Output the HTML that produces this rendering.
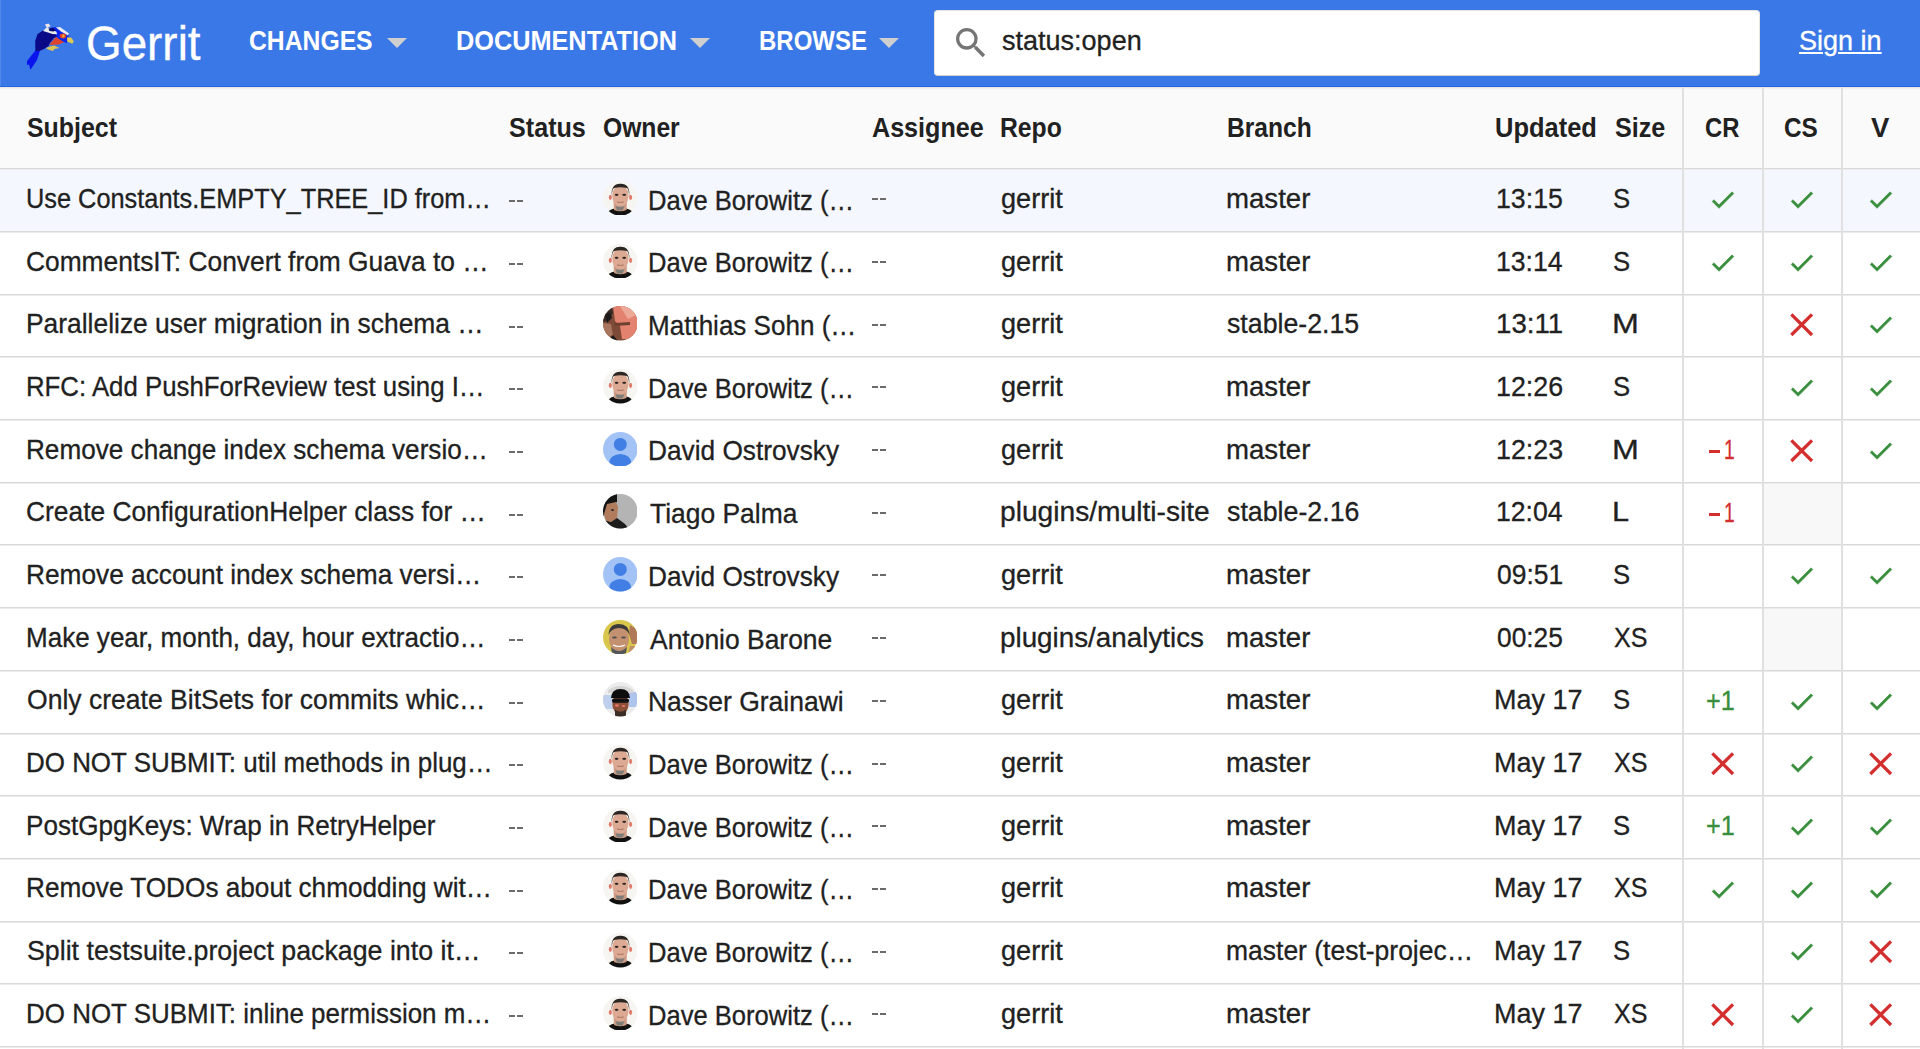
<!DOCTYPE html>
<html><head><meta charset="utf-8"><title>Gerrit Code Review</title>
<style>
html,body{margin:0;padding:0;}
body{width:1920px;height:1049px;overflow:hidden;position:relative;background:#fff;font-family:"Liberation Sans",sans-serif;color:#212121;}
.hdr{position:absolute;left:0;top:0;width:1920px;height:86px;background:#3b78e7;border-bottom:1px solid #2467e0;}
.hdrsh{position:absolute;left:0;top:87px;width:1920px;height:3px;background:linear-gradient(#e3e1dc,#f3f2f0 50%,#fafafa);}
.logo{position:absolute;left:24px;top:20px;width:52px;height:52px;}
.brand{position:absolute;left:86px;top:0;font-size:45px;line-height:0;color:#fff;}
.nav{position:absolute;color:#fff;font-weight:bold;font-size:26px;line-height:0;}
.tri{position:absolute;width:0;height:0;border-left:10px solid transparent;border-right:10px solid transparent;border-top:10px solid #cfcfcf;}
.search{position:absolute;left:934px;top:10px;width:826px;height:65.5px;background:#fff;border-radius:4px;border:1px solid #e6e4de;border-bottom-color:#d4d2cc;box-sizing:border-box;}
.stext{position:absolute;left:1001px;font-size:27px;line-height:0;color:#212121;}
.signin{position:absolute;left:1799px;font-size:27px;line-height:0;color:#fff;text-decoration:underline;text-underline-offset:3px;}
.thead{position:absolute;left:0;top:90px;width:1920px;height:79px;background:#fafafa;}
.rowbg{position:absolute;left:0;width:1920px;background:#f4f7fd;}
.gray{position:absolute;background:#f8f8f8;}
.t{position:absolute;font-size:27.5px;line-height:0;white-space:nowrap;transform-origin:0 0;-webkit-text-stroke:0.3px currentColor;}
.mark{position:absolute;}
.b{font-weight:bold;-webkit-text-stroke:0;}
.c{text-align:center;}
.dash{position:absolute;width:6px;height:2px;background:#6b6b6b;}
.ic{position:absolute;}
.av{position:absolute;}
.hl{position:absolute;left:0;width:1920px;height:2px;background:linear-gradient(#d9d9d9 50%,#ebebeb 50%);}
.vl{position:absolute;top:88px;width:2px;height:961px;background:#e0e0e0;}
</style></head><body>
<div class="hdr"></div><div class="hdrsh"></div><div style="position:absolute;left:0;top:0;width:1px;height:86px;background:#5089ea"></div>
<svg class="logo" viewBox="0 0 52 52">
 <path d="M3 41 L11.4 30.5 L16 30.8 L13 40 L9 46 L6.5 49.8 L5 44.5 L3 45z" fill="#0a14ee"/>
 <path d="M11.4 31 L11.2 21 L13.5 14 L19 10.5 L26 9.5 L32 12 L34 16.5 L30 18 L26 23 L24.5 26 L20 29 L15.5 31z" fill="#0a0a88"/>
 <path d="M24 8.5 L31 7 L39 10.5 L44.5 14.5 L45 19 L42.5 23 L37 21 L33 17.5 L31 13z" fill="#0a26ee"/>
 <path d="M19 11 L22.5 7.5 L27.5 8.5 L32.5 12 L33 14.3 L28.5 14 L24 12.5z" fill="#e8ecea"/>
 <path d="M21 4.5 L24.5 3.5 L26.5 6 L23 8z" fill="#f2e6e6"/>
 <path d="M32 7.5 L36 7 L45 13.5 L44 15.5 L37 11.5z" fill="#e8ecf0"/>
 <path d="M24.5 8.5 L29 7.8 L32 10.2 L29.5 11.6 L25.5 11z" fill="#060870"/>
 <ellipse cx="39" cy="16" rx="3.3" ry="2.4" fill="#e03c2a"/>
 <ellipse cx="39.3" cy="16" rx="1.3" ry="1.7" fill="#d8b040"/>
 <path d="M43 17.2 L47.5 17.8 L49.8 21.5 L48.3 23.8 L43.2 21.5z" fill="#e0c852"/>
 <path d="M25 25 L32 17 L40 22.3 L34.5 24.5z" fill="#e0432c"/>
 <path d="M22 28 L26 26.5 L30 25.5 L35.5 28 L30.5 29 L29 31 L24 29.5z" fill="#dcc454"/>
</svg>
<div class="t" style="left:85.94px;top:42.69px;font-size:48.5px;transform:scaleX(0.9446);color:#fff">Gerrit</div>
<div class="t b" style="left:249.30px;top:41.20px;font-size:28px;transform:scaleX(0.8828);color:#fff">CHANGES</div>
<div class="tri" style="left:387px;top:38px"></div>
<div class="t b" style="left:455.59px;top:41.20px;font-size:28px;transform:scaleX(0.9030);color:#fff">DOCUMENTATION</div>
<div class="tri" style="left:690px;top:38px"></div>
<div class="t b" style="left:758.59px;top:41.20px;font-size:28px;transform:scaleX(0.8569);color:#fff">BROWSE</div>
<div class="tri" style="left:879px;top:38px"></div>
<div class="search"></div>
<svg style="position:absolute;left:951px;top:23px;width:40px;height:40px" viewBox="0 0 24 24"><path fill="#757575" d="M15.5 14h-.79l-.28-.27A6.471 6.471 0 0 0 16 9.5 6.5 6.5 0 1 0 9.5 16c1.61 0 3.09-.59 4.23-1.57l.27.28v.79l5 4.99L20.49 19l-4.99-5zm-6 0C7.01 14 5 11.99 5 9.5S7.01 5 9.5 5 14 7.01 14 9.5 11.99 14 9.5 14z"/></svg>
<div class="t" style="left:1001.56px;top:41.47px;font-size:27.5px;transform:scaleX(0.9825);">status:open</div>
<div class="t" style="left:1799.07px;top:41.47px;font-size:27.5px;transform:scaleX(0.9827);color:#fff;text-decoration:underline;text-underline-offset:2px;text-decoration-thickness:2px">Sign in</div>
<div class="thead"></div>
<div class="t b" style="left:26.62px;top:127.67px;font-size:27.5px;transform:scaleX(0.9059);">Subject</div>
<div class="t b" style="left:509.11px;top:127.67px;font-size:27.5px;transform:scaleX(0.9143);">Status</div>
<div class="t b" style="left:602.78px;top:127.67px;font-size:27.5px;transform:scaleX(0.8964);">Owner</div>
<div class="t b" style="left:871.91px;top:127.67px;font-size:27.5px;transform:scaleX(0.9137);">Assignee</div>
<div class="t b" style="left:1000.33px;top:127.67px;font-size:27.5px;transform:scaleX(0.8985);">Repo</div>
<div class="t b" style="left:1226.84px;top:127.67px;font-size:27.5px;transform:scaleX(0.8942);">Branch</div>
<div class="t b" style="left:1495.48px;top:127.67px;font-size:27.5px;transform:scaleX(0.9258);">Updated</div>
<div class="t b" style="left:1615.11px;top:127.67px;font-size:27.5px;transform:scaleX(0.9146);">Size</div>
<div class="t b" style="left:1705.22px;top:127.67px;font-size:27.5px;transform:scaleX(0.8662);">CR</div>
<div class="t b" style="left:1784.29px;top:127.67px;font-size:27.5px;transform:scaleX(0.8861);">CS</div>
<div class="t b" style="left:1871.05px;top:127.67px;font-size:27.5px;transform:scaleX(0.9972);">V</div>
<div class="rowbg" style="top:168.80px;height:62.69px"></div>
<div class="t" style="left:26.06px;top:198.87px;font-size:27.5px;transform:scaleX(0.9216);">Use Constants.EMPTY_TREE_ID from…</div>
<div class="dash" style="left:509px;top:200.20px"></div><div class="dash" style="left:517px;top:200.20px"></div>
<svg class="av" style="left:602.50px;top:180.90px;width:34.60px;height:34.60px" viewBox="0 0 34.6 34.6"><defs><clipPath id="cdave198"><circle cx="17.3" cy="17.3" r="17.3"/></clipPath></defs><g clip-path="url(#cdave198)"><rect width="35" height="35" fill="#f7f5f1"/><path d="M3 35 Q5 28.5 11.5 27.5 L23 27.5 Q29.5 28.5 31.5 35z" fill="#111"/><path d="M10.5 20 L24 20 L23.5 29 Q17.3 31.5 11 29z" fill="#cf9c84"/><path d="M12.5 25.5 L21.5 25.5 L19.5 29.5 L14 29.5z" fill="#7f7d7a"/><ellipse cx="7.3" cy="16.3" rx="1.5" ry="2.6" fill="#e07868"/><ellipse cx="27.6" cy="16.3" rx="1.5" ry="2.6" fill="#e07868"/><ellipse cx="17.4" cy="14.8" rx="8.2" ry="10.8" fill="#dcaa93"/><path d="M8.6 15 Q8 2.5 17.4 2.8 Q27 2.5 26.3 15 Q25.5 7.5 24 7 Q17.4 5.5 11 7 Q9.3 7.5 8.6 15z" fill="#2b2623"/><ellipse cx="13.6" cy="13.8" rx="1.9" ry="1.1" fill="#2e2624"/><ellipse cx="21.2" cy="13.8" rx="1.9" ry="1.1" fill="#2e2624"/><path d="M14 21 Q17.4 22 20.8 21" stroke="#a86e5c" stroke-width="1" fill="none"/></g></svg>
<div class="t" style="left:647.91px;top:200.67px;font-size:27.5px;transform:scaleX(0.9295);">Dave Borowitz (…</div>
<div class="dash" style="left:872px;top:198.30px"></div><div class="dash" style="left:880px;top:198.30px"></div>
<div class="t" style="left:1000.87px;top:198.87px;font-size:27.5px;transform:scaleX(0.9861);">gerrit</div>
<div class="t" style="left:1226.34px;top:198.87px;font-size:27.5px;transform:scaleX(1.0043);">master</div>
<div class="t" style="left:1496.16px;top:198.87px;font-size:27.5px;transform:scaleX(0.9719);">13:15</div>
<div class="t" style="left:1613.13px;top:198.87px;font-size:27.5px;transform:scaleX(0.9333);">S</div>
<svg class="ic" style="left:1707.77px;top:185.00px;width:29.47px;height:29.47px" viewBox="0 0 24 24"><path fill="#388e3c" stroke="#388e3c" stroke-width="0.45" stroke-linejoin="miter" d="M9 16.17L4.83 12l-1.42 1.41L9 19 21 7l-1.41-1.41z"/></svg>
<svg class="ic" style="left:1787.02px;top:185.00px;width:29.47px;height:29.47px" viewBox="0 0 24 24"><path fill="#388e3c" stroke="#388e3c" stroke-width="0.45" stroke-linejoin="miter" d="M9 16.17L4.83 12l-1.42 1.41L9 19 21 7l-1.41-1.41z"/></svg>
<svg class="ic" style="left:1865.77px;top:185.00px;width:29.47px;height:29.47px" viewBox="0 0 24 24"><path fill="#388e3c" stroke="#388e3c" stroke-width="0.45" stroke-linejoin="miter" d="M9 16.17L4.83 12l-1.42 1.41L9 19 21 7l-1.41-1.41z"/></svg>
<div class="t" style="left:26.46px;top:261.56px;font-size:27.5px;transform:scaleX(0.9580);">CommentsIT: Convert from Guava to …</div>
<div class="dash" style="left:509px;top:262.89px"></div><div class="dash" style="left:517px;top:262.89px"></div>
<svg class="av" style="left:602.50px;top:243.59px;width:34.60px;height:34.60px" viewBox="0 0 34.6 34.6"><defs><clipPath id="cdave260"><circle cx="17.3" cy="17.3" r="17.3"/></clipPath></defs><g clip-path="url(#cdave260)"><rect width="35" height="35" fill="#f7f5f1"/><path d="M3 35 Q5 28.5 11.5 27.5 L23 27.5 Q29.5 28.5 31.5 35z" fill="#111"/><path d="M10.5 20 L24 20 L23.5 29 Q17.3 31.5 11 29z" fill="#cf9c84"/><path d="M12.5 25.5 L21.5 25.5 L19.5 29.5 L14 29.5z" fill="#7f7d7a"/><ellipse cx="7.3" cy="16.3" rx="1.5" ry="2.6" fill="#e07868"/><ellipse cx="27.6" cy="16.3" rx="1.5" ry="2.6" fill="#e07868"/><ellipse cx="17.4" cy="14.8" rx="8.2" ry="10.8" fill="#dcaa93"/><path d="M8.6 15 Q8 2.5 17.4 2.8 Q27 2.5 26.3 15 Q25.5 7.5 24 7 Q17.4 5.5 11 7 Q9.3 7.5 8.6 15z" fill="#2b2623"/><ellipse cx="13.6" cy="13.8" rx="1.9" ry="1.1" fill="#2e2624"/><ellipse cx="21.2" cy="13.8" rx="1.9" ry="1.1" fill="#2e2624"/><path d="M14 21 Q17.4 22 20.8 21" stroke="#a86e5c" stroke-width="1" fill="none"/></g></svg>
<div class="t" style="left:647.91px;top:263.36px;font-size:27.5px;transform:scaleX(0.9295);">Dave Borowitz (…</div>
<div class="dash" style="left:872px;top:260.99px"></div><div class="dash" style="left:880px;top:260.99px"></div>
<div class="t" style="left:1000.87px;top:261.56px;font-size:27.5px;transform:scaleX(0.9861);">gerrit</div>
<div class="t" style="left:1226.34px;top:261.56px;font-size:27.5px;transform:scaleX(1.0043);">master</div>
<div class="t" style="left:1496.16px;top:261.56px;font-size:27.5px;transform:scaleX(0.9682);">13:14</div>
<div class="t" style="left:1613.13px;top:261.56px;font-size:27.5px;transform:scaleX(0.9333);">S</div>
<svg class="ic" style="left:1707.77px;top:247.69px;width:29.47px;height:29.47px" viewBox="0 0 24 24"><path fill="#388e3c" stroke="#388e3c" stroke-width="0.45" stroke-linejoin="miter" d="M9 16.17L4.83 12l-1.42 1.41L9 19 21 7l-1.41-1.41z"/></svg>
<svg class="ic" style="left:1787.02px;top:247.69px;width:29.47px;height:29.47px" viewBox="0 0 24 24"><path fill="#388e3c" stroke="#388e3c" stroke-width="0.45" stroke-linejoin="miter" d="M9 16.17L4.83 12l-1.42 1.41L9 19 21 7l-1.41-1.41z"/></svg>
<svg class="ic" style="left:1865.77px;top:247.69px;width:29.47px;height:29.47px" viewBox="0 0 24 24"><path fill="#388e3c" stroke="#388e3c" stroke-width="0.45" stroke-linejoin="miter" d="M9 16.17L4.83 12l-1.42 1.41L9 19 21 7l-1.41-1.41z"/></svg>
<div class="t" style="left:25.74px;top:324.25px;font-size:27.5px;transform:scaleX(0.9599);">Parallelize user migration in schema …</div>
<div class="dash" style="left:509px;top:325.58px"></div><div class="dash" style="left:517px;top:325.58px"></div>
<svg class="av" style="left:602.50px;top:306.28px;width:34.60px;height:34.60px" viewBox="0 0 34.6 34.6"><defs><clipPath id="cmatthias323"><circle cx="17.3" cy="17.3" r="17.3"/></clipPath></defs><g clip-path="url(#cmatthias323)"><rect width="35" height="35" fill="#7d4a38"/><path d="M10 0 L35 0 L35 25 L27 33 L19 33 L17 20 L12 15z" fill="#e3826f"/><path d="M17 0 L30 0 L33 9 L25 13z" fill="#eda998"/><path d="M0 17 L8 18 L10 29 L4 32 L0 30z" fill="#a8765e"/><path d="M0 0 L9 0 L10 7 L5 15 L0 16z" fill="#3a2a26"/><path d="M2 9 L7 6 L9 12 L4 17z" fill="#1c1a1a"/><path d="M6 33 L10 29 L15 35 L4 35z" fill="#1a1818"/><path d="M29 35 L32 27 L35 25 L35 35z" fill="#1c1a1a"/><path d="M12 17 L27 16 L27 19 L12 20z" fill="#6e3e2e"/></g></svg>
<div class="t" style="left:647.87px;top:326.05px;font-size:27.5px;transform:scaleX(0.9466);">Matthias Sohn (…</div>
<div class="dash" style="left:872px;top:323.68px"></div><div class="dash" style="left:880px;top:323.68px"></div>
<div class="t" style="left:1000.87px;top:324.25px;font-size:27.5px;transform:scaleX(0.9861);">gerrit</div>
<div class="t" style="left:1227.37px;top:324.25px;font-size:27.5px;transform:scaleX(0.9713);">stable-2.15</div>
<div class="t" style="left:1496.09px;top:324.25px;font-size:27.5px;transform:scaleX(1.0063);">13:11</div>
<div class="t" style="left:1611.66px;top:324.25px;font-size:27.5px;transform:scaleX(1.1730);">M</div>
<svg class="ic" style="left:1782.32px;top:305.30px;width:39.36px;height:39.36px" viewBox="0 0 24 24"><path fill="#d32f2f" d="M19 6.41L17.59 5 12 10.59 6.41 5 5 6.41 10.59 12 5 17.59 6.41 19 12 13.41 17.59 19 19 17.59 13.41 12z"/></svg>
<svg class="ic" style="left:1865.77px;top:310.38px;width:29.47px;height:29.47px" viewBox="0 0 24 24"><path fill="#388e3c" stroke="#388e3c" stroke-width="0.45" stroke-linejoin="miter" d="M9 16.17L4.83 12l-1.42 1.41L9 19 21 7l-1.41-1.41z"/></svg>
<div class="t" style="left:25.79px;top:386.94px;font-size:27.5px;transform:scaleX(0.9377);">RFC: Add PushForReview test using I…</div>
<div class="dash" style="left:509px;top:388.27px"></div><div class="dash" style="left:517px;top:388.27px"></div>
<svg class="av" style="left:602.50px;top:368.97px;width:34.60px;height:34.60px" viewBox="0 0 34.6 34.6"><defs><clipPath id="cdave386"><circle cx="17.3" cy="17.3" r="17.3"/></clipPath></defs><g clip-path="url(#cdave386)"><rect width="35" height="35" fill="#f7f5f1"/><path d="M3 35 Q5 28.5 11.5 27.5 L23 27.5 Q29.5 28.5 31.5 35z" fill="#111"/><path d="M10.5 20 L24 20 L23.5 29 Q17.3 31.5 11 29z" fill="#cf9c84"/><path d="M12.5 25.5 L21.5 25.5 L19.5 29.5 L14 29.5z" fill="#7f7d7a"/><ellipse cx="7.3" cy="16.3" rx="1.5" ry="2.6" fill="#e07868"/><ellipse cx="27.6" cy="16.3" rx="1.5" ry="2.6" fill="#e07868"/><ellipse cx="17.4" cy="14.8" rx="8.2" ry="10.8" fill="#dcaa93"/><path d="M8.6 15 Q8 2.5 17.4 2.8 Q27 2.5 26.3 15 Q25.5 7.5 24 7 Q17.4 5.5 11 7 Q9.3 7.5 8.6 15z" fill="#2b2623"/><ellipse cx="13.6" cy="13.8" rx="1.9" ry="1.1" fill="#2e2624"/><ellipse cx="21.2" cy="13.8" rx="1.9" ry="1.1" fill="#2e2624"/><path d="M14 21 Q17.4 22 20.8 21" stroke="#a86e5c" stroke-width="1" fill="none"/></g></svg>
<div class="t" style="left:647.91px;top:388.74px;font-size:27.5px;transform:scaleX(0.9295);">Dave Borowitz (…</div>
<div class="dash" style="left:872px;top:386.37px"></div><div class="dash" style="left:880px;top:386.37px"></div>
<div class="t" style="left:1000.87px;top:386.94px;font-size:27.5px;transform:scaleX(0.9861);">gerrit</div>
<div class="t" style="left:1226.34px;top:386.94px;font-size:27.5px;transform:scaleX(1.0043);">master</div>
<div class="t" style="left:1496.15px;top:386.94px;font-size:27.5px;transform:scaleX(0.9756);">12:26</div>
<div class="t" style="left:1613.13px;top:386.94px;font-size:27.5px;transform:scaleX(0.9333);">S</div>
<svg class="ic" style="left:1787.02px;top:373.07px;width:29.47px;height:29.47px" viewBox="0 0 24 24"><path fill="#388e3c" stroke="#388e3c" stroke-width="0.45" stroke-linejoin="miter" d="M9 16.17L4.83 12l-1.42 1.41L9 19 21 7l-1.41-1.41z"/></svg>
<svg class="ic" style="left:1865.77px;top:373.07px;width:29.47px;height:29.47px" viewBox="0 0 24 24"><path fill="#388e3c" stroke="#388e3c" stroke-width="0.45" stroke-linejoin="miter" d="M9 16.17L4.83 12l-1.42 1.41L9 19 21 7l-1.41-1.41z"/></svg>
<div class="t" style="left:25.76px;top:449.63px;font-size:27.5px;transform:scaleX(0.9502);">Remove change index schema versio…</div>
<div class="dash" style="left:509px;top:450.96px"></div><div class="dash" style="left:517px;top:450.96px"></div>
<svg class="av" style="left:602.50px;top:431.66px;width:34.60px;height:34.60px" viewBox="0 0 34.6 34.6"><defs><clipPath id="cdefault448"><circle cx="17.3" cy="17.3" r="17.3"/></clipPath></defs><g clip-path="url(#cdefault448)"><rect width="35" height="35" fill="#a3c3f7"/><circle cx="17.3" cy="12.4" r="6.5" fill="#427fe4"/><ellipse cx="17.3" cy="30.5" rx="11" ry="8.6" fill="#427fe4"/></g></svg>
<div class="t" style="left:647.85px;top:451.43px;font-size:27.5px;transform:scaleX(0.9542);">David Ostrovsky</div>
<div class="dash" style="left:872px;top:449.06px"></div><div class="dash" style="left:880px;top:449.06px"></div>
<div class="t" style="left:1000.87px;top:449.63px;font-size:27.5px;transform:scaleX(0.9861);">gerrit</div>
<div class="t" style="left:1226.34px;top:449.63px;font-size:27.5px;transform:scaleX(1.0043);">master</div>
<div class="t" style="left:1496.15px;top:449.63px;font-size:27.5px;transform:scaleX(0.9756);">12:23</div>
<div class="t" style="left:1611.66px;top:449.63px;font-size:27.5px;transform:scaleX(1.1730);">M</div>
<div class="mark" style="left:1708.8px;top:450.46px;width:11px;height:2.4px;background:#d32f2f"></div>
<div class="t" style="left:1724.20px;top:450.23px;font-size:27.5px;transform:scaleX(0.7000);color:#d32f2f">1</div>
<svg class="ic" style="left:1782.32px;top:430.68px;width:39.36px;height:39.36px" viewBox="0 0 24 24"><path fill="#d32f2f" d="M19 6.41L17.59 5 12 10.59 6.41 5 5 6.41 10.59 12 5 17.59 6.41 19 12 13.41 17.59 19 19 17.59 13.41 12z"/></svg>
<svg class="ic" style="left:1865.77px;top:435.76px;width:29.47px;height:29.47px" viewBox="0 0 24 24"><path fill="#388e3c" stroke="#388e3c" stroke-width="0.45" stroke-linejoin="miter" d="M9 16.17L4.83 12l-1.42 1.41L9 19 21 7l-1.41-1.41z"/></svg>
<div class="gray" style="left:1761.5px;top:482.25px;width:79.0px;height:62.69px"></div>
<div class="t" style="left:26.46px;top:512.32px;font-size:27.5px;transform:scaleX(0.9584);">Create ConfigurationHelper class for …</div>
<div class="dash" style="left:509px;top:513.65px"></div><div class="dash" style="left:517px;top:513.65px"></div>
<svg class="av" style="left:602.50px;top:494.35px;width:34.60px;height:34.60px" viewBox="0 0 34.6 34.6"><defs><clipPath id="ctiago511"><circle cx="17.3" cy="17.3" r="17.3"/></clipPath></defs><g clip-path="url(#ctiago511)"><rect width="35" height="35" fill="#b4b4b4"/><path d="M0 0 L14 0 L14 8 L6 12 L3 20 L0 22z" fill="#141414"/><path d="M4 10 L13 8 L15 13 L14 24 L8 28 L3 27 L1 20z" fill="#b07c5c"/><path d="M0 26 L8 28 L14 24 L22 30 L26 35 L0 35z" fill="#1c1c1c"/><ellipse cx="9.5" cy="16" rx="1.5" ry="0.9" fill="#2a2a30"/></g></svg>
<div class="t" style="left:649.52px;top:514.12px;font-size:27.5px;transform:scaleX(0.9610);">Tiago Palma</div>
<div class="dash" style="left:872px;top:511.75px"></div><div class="dash" style="left:880px;top:511.75px"></div>
<div class="t" style="left:1000.31px;top:512.32px;font-size:27.5px;transform:scaleX(1.0240);">plugins/multi-site</div>
<div class="t" style="left:1227.37px;top:512.32px;font-size:27.5px;transform:scaleX(0.9731);">stable-2.16</div>
<div class="t" style="left:1496.16px;top:512.32px;font-size:27.5px;transform:scaleX(0.9682);">12:04</div>
<div class="t" style="left:1611.78px;top:512.32px;font-size:27.5px;transform:scaleX(1.1184);">L</div>
<div class="mark" style="left:1708.8px;top:513.15px;width:11px;height:2.4px;background:#d32f2f"></div>
<div class="t" style="left:1724.20px;top:512.92px;font-size:27.5px;transform:scaleX(0.7000);color:#d32f2f">1</div>
<div class="t" style="left:25.75px;top:575.01px;font-size:27.5px;transform:scaleX(0.9546);">Remove account index schema versi…</div>
<div class="dash" style="left:509px;top:576.34px"></div><div class="dash" style="left:517px;top:576.34px"></div>
<svg class="av" style="left:602.50px;top:557.04px;width:34.60px;height:34.60px" viewBox="0 0 34.6 34.6"><defs><clipPath id="cdefault574"><circle cx="17.3" cy="17.3" r="17.3"/></clipPath></defs><g clip-path="url(#cdefault574)"><rect width="35" height="35" fill="#a3c3f7"/><circle cx="17.3" cy="12.4" r="6.5" fill="#427fe4"/><ellipse cx="17.3" cy="30.5" rx="11" ry="8.6" fill="#427fe4"/></g></svg>
<div class="t" style="left:647.85px;top:576.81px;font-size:27.5px;transform:scaleX(0.9542);">David Ostrovsky</div>
<div class="dash" style="left:872px;top:574.44px"></div><div class="dash" style="left:880px;top:574.44px"></div>
<div class="t" style="left:1000.87px;top:575.01px;font-size:27.5px;transform:scaleX(0.9861);">gerrit</div>
<div class="t" style="left:1226.34px;top:575.01px;font-size:27.5px;transform:scaleX(1.0043);">master</div>
<div class="t" style="left:1497.14px;top:575.01px;font-size:27.5px;transform:scaleX(0.9609);">09:51</div>
<div class="t" style="left:1613.13px;top:575.01px;font-size:27.5px;transform:scaleX(0.9333);">S</div>
<svg class="ic" style="left:1787.02px;top:561.14px;width:29.47px;height:29.47px" viewBox="0 0 24 24"><path fill="#388e3c" stroke="#388e3c" stroke-width="0.45" stroke-linejoin="miter" d="M9 16.17L4.83 12l-1.42 1.41L9 19 21 7l-1.41-1.41z"/></svg>
<svg class="ic" style="left:1865.77px;top:561.14px;width:29.47px;height:29.47px" viewBox="0 0 24 24"><path fill="#388e3c" stroke="#388e3c" stroke-width="0.45" stroke-linejoin="miter" d="M9 16.17L4.83 12l-1.42 1.41L9 19 21 7l-1.41-1.41z"/></svg>
<div class="gray" style="left:1761.5px;top:607.63px;width:79.0px;height:62.69px"></div>
<div class="t" style="left:25.77px;top:637.70px;font-size:27.5px;transform:scaleX(0.9464);">Make year, month, day, hour extractio…</div>
<div class="dash" style="left:509px;top:639.03px"></div><div class="dash" style="left:517px;top:639.03px"></div>
<svg class="av" style="left:602.50px;top:619.73px;width:34.60px;height:34.60px" viewBox="0 0 34.6 34.6"><defs><clipPath id="cantonio637"><circle cx="17.3" cy="17.3" r="17.3"/></clipPath></defs><g clip-path="url(#cantonio637)"><rect width="35" height="35" fill="#d9c64c"/><path d="M27 5 L35 10 L35 24 L29 24 L26 14z" fill="#b07a58"/><path d="M27 26 L35 26 L35 35 L25 35z" fill="#c09068"/><ellipse cx="16" cy="19" rx="10" ry="13" fill="#c39170"/><path d="M5.5 15 Q6 4 16 4 Q26 4 26.5 15 Q23.5 8 16 8 Q8.5 8 5.5 15z" fill="#3a3a3a"/><ellipse cx="11.5" cy="17.5" rx="2.4" ry="1.1" fill="#4a4e54"/><ellipse cx="20.5" cy="17.5" rx="2.4" ry="1.1" fill="#4a4e54"/><path d="M10 25 Q16 28 22 25" stroke="#fff" stroke-width="1.2" fill="none"/><path d="M8 27 Q16 35 24 27 L23 33 Q16 36 9 33z" fill="#55575b"/></g></svg>
<div class="t" style="left:650.00px;top:639.50px;font-size:27.5px;transform:scaleX(0.9613);">Antonio Barone</div>
<div class="dash" style="left:872px;top:637.13px"></div><div class="dash" style="left:880px;top:637.13px"></div>
<div class="t" style="left:1000.33px;top:637.70px;font-size:27.5px;transform:scaleX(1.0111);">plugins/analytics</div>
<div class="t" style="left:1226.34px;top:637.70px;font-size:27.5px;transform:scaleX(1.0043);">master</div>
<div class="t" style="left:1497.14px;top:637.70px;font-size:27.5px;transform:scaleX(0.9573);">00:25</div>
<div class="t" style="left:1613.62px;top:637.70px;font-size:27.5px;transform:scaleX(0.9122);">XS</div>
<div class="t" style="left:26.69px;top:700.39px;font-size:27.5px;transform:scaleX(0.9650);">Only create BitSets for commits whic…</div>
<div class="dash" style="left:509px;top:701.72px"></div><div class="dash" style="left:517px;top:701.72px"></div>
<svg class="av" style="left:602.50px;top:682.42px;width:34.60px;height:34.60px" viewBox="0 0 34.6 34.6"><defs><clipPath id="cnasser699"><circle cx="17.3" cy="17.3" r="17.3"/></clipPath></defs><g clip-path="url(#cnasser699)"><rect width="35" height="35" fill="#ececec"/><path d="M0 13 L9 13 L10 27 L0 27z" fill="#bfd0ee"/><path d="M26 10 L35 10 L35 25 L26 25z" fill="#aec4ec"/><path d="M5 8 Q17.5 0 30 8 L30 11 L5 11z" fill="#d6d6d6"/><ellipse cx="17.5" cy="22" rx="8.2" ry="10.5" fill="#8a5038"/><path d="M8 16 Q8.5 7 17.5 7 Q26.5 7 27 16z" fill="#0d0d0d"/><rect x="9" y="16.5" width="17" height="4.2" rx="1.8" fill="#111"/><path d="M12 27.5 Q17.5 32 23 27.5 L23 35 L12 35z" fill="#3a2c26"/><ellipse cx="14" cy="23.5" rx="2" ry="1.2" fill="#e8746a"/><ellipse cx="20.5" cy="24" rx="1.8" ry="1.1" fill="#e87468"/></g></svg>
<div class="t" style="left:647.83px;top:702.19px;font-size:27.5px;transform:scaleX(0.9626);">Nasser Grainawi</div>
<div class="dash" style="left:872px;top:699.82px"></div><div class="dash" style="left:880px;top:699.82px"></div>
<div class="t" style="left:1000.87px;top:700.39px;font-size:27.5px;transform:scaleX(0.9861);">gerrit</div>
<div class="t" style="left:1226.34px;top:700.39px;font-size:27.5px;transform:scaleX(1.0043);">master</div>
<div class="t" style="left:1494.39px;top:700.39px;font-size:27.5px;transform:scaleX(0.9815);">May 17</div>
<div class="t" style="left:1613.13px;top:700.39px;font-size:27.5px;transform:scaleX(0.9333);">S</div>
<div class="t" style="left:1706.45px;top:700.99px;font-size:27.5px;transform:scaleX(0.9183);color:#388e3c">+1</div>
<svg class="ic" style="left:1787.02px;top:686.52px;width:29.47px;height:29.47px" viewBox="0 0 24 24"><path fill="#388e3c" stroke="#388e3c" stroke-width="0.45" stroke-linejoin="miter" d="M9 16.17L4.83 12l-1.42 1.41L9 19 21 7l-1.41-1.41z"/></svg>
<svg class="ic" style="left:1865.77px;top:686.52px;width:29.47px;height:29.47px" viewBox="0 0 24 24"><path fill="#388e3c" stroke="#388e3c" stroke-width="0.45" stroke-linejoin="miter" d="M9 16.17L4.83 12l-1.42 1.41L9 19 21 7l-1.41-1.41z"/></svg>
<div class="t" style="left:25.78px;top:763.08px;font-size:27.5px;transform:scaleX(0.9436);">DO NOT SUBMIT: util methods in plug…</div>
<div class="dash" style="left:509px;top:764.41px"></div><div class="dash" style="left:517px;top:764.41px"></div>
<svg class="av" style="left:602.50px;top:745.11px;width:34.60px;height:34.60px" viewBox="0 0 34.6 34.6"><defs><clipPath id="cdave762"><circle cx="17.3" cy="17.3" r="17.3"/></clipPath></defs><g clip-path="url(#cdave762)"><rect width="35" height="35" fill="#f7f5f1"/><path d="M3 35 Q5 28.5 11.5 27.5 L23 27.5 Q29.5 28.5 31.5 35z" fill="#111"/><path d="M10.5 20 L24 20 L23.5 29 Q17.3 31.5 11 29z" fill="#cf9c84"/><path d="M12.5 25.5 L21.5 25.5 L19.5 29.5 L14 29.5z" fill="#7f7d7a"/><ellipse cx="7.3" cy="16.3" rx="1.5" ry="2.6" fill="#e07868"/><ellipse cx="27.6" cy="16.3" rx="1.5" ry="2.6" fill="#e07868"/><ellipse cx="17.4" cy="14.8" rx="8.2" ry="10.8" fill="#dcaa93"/><path d="M8.6 15 Q8 2.5 17.4 2.8 Q27 2.5 26.3 15 Q25.5 7.5 24 7 Q17.4 5.5 11 7 Q9.3 7.5 8.6 15z" fill="#2b2623"/><ellipse cx="13.6" cy="13.8" rx="1.9" ry="1.1" fill="#2e2624"/><ellipse cx="21.2" cy="13.8" rx="1.9" ry="1.1" fill="#2e2624"/><path d="M14 21 Q17.4 22 20.8 21" stroke="#a86e5c" stroke-width="1" fill="none"/></g></svg>
<div class="t" style="left:647.91px;top:764.88px;font-size:27.5px;transform:scaleX(0.9295);">Dave Borowitz (…</div>
<div class="dash" style="left:872px;top:762.51px"></div><div class="dash" style="left:880px;top:762.51px"></div>
<div class="t" style="left:1000.87px;top:763.08px;font-size:27.5px;transform:scaleX(0.9861);">gerrit</div>
<div class="t" style="left:1226.34px;top:763.08px;font-size:27.5px;transform:scaleX(1.0043);">master</div>
<div class="t" style="left:1494.39px;top:763.08px;font-size:27.5px;transform:scaleX(0.9815);">May 17</div>
<div class="t" style="left:1613.62px;top:763.08px;font-size:27.5px;transform:scaleX(0.9122);">XS</div>
<svg class="ic" style="left:1703.07px;top:744.13px;width:39.36px;height:39.36px" viewBox="0 0 24 24"><path fill="#d32f2f" d="M19 6.41L17.59 5 12 10.59 6.41 5 5 6.41 10.59 12 5 17.59 6.41 19 12 13.41 17.59 19 19 17.59 13.41 12z"/></svg>
<svg class="ic" style="left:1787.02px;top:749.21px;width:29.47px;height:29.47px" viewBox="0 0 24 24"><path fill="#388e3c" stroke="#388e3c" stroke-width="0.45" stroke-linejoin="miter" d="M9 16.17L4.83 12l-1.42 1.41L9 19 21 7l-1.41-1.41z"/></svg>
<svg class="ic" style="left:1861.07px;top:744.13px;width:39.36px;height:39.36px" viewBox="0 0 24 24"><path fill="#d32f2f" d="M19 6.41L17.59 5 12 10.59 6.41 5 5 6.41 10.59 12 5 17.59 6.41 19 12 13.41 17.59 19 19 17.59 13.41 12z"/></svg>
<div class="t" style="left:25.77px;top:825.77px;font-size:27.5px;transform:scaleX(0.9479);">PostGpgKeys: Wrap in RetryHelper</div>
<div class="dash" style="left:509px;top:827.10px"></div><div class="dash" style="left:517px;top:827.10px"></div>
<svg class="av" style="left:602.50px;top:807.80px;width:34.60px;height:34.60px" viewBox="0 0 34.6 34.6"><defs><clipPath id="cdave825"><circle cx="17.3" cy="17.3" r="17.3"/></clipPath></defs><g clip-path="url(#cdave825)"><rect width="35" height="35" fill="#f7f5f1"/><path d="M3 35 Q5 28.5 11.5 27.5 L23 27.5 Q29.5 28.5 31.5 35z" fill="#111"/><path d="M10.5 20 L24 20 L23.5 29 Q17.3 31.5 11 29z" fill="#cf9c84"/><path d="M12.5 25.5 L21.5 25.5 L19.5 29.5 L14 29.5z" fill="#7f7d7a"/><ellipse cx="7.3" cy="16.3" rx="1.5" ry="2.6" fill="#e07868"/><ellipse cx="27.6" cy="16.3" rx="1.5" ry="2.6" fill="#e07868"/><ellipse cx="17.4" cy="14.8" rx="8.2" ry="10.8" fill="#dcaa93"/><path d="M8.6 15 Q8 2.5 17.4 2.8 Q27 2.5 26.3 15 Q25.5 7.5 24 7 Q17.4 5.5 11 7 Q9.3 7.5 8.6 15z" fill="#2b2623"/><ellipse cx="13.6" cy="13.8" rx="1.9" ry="1.1" fill="#2e2624"/><ellipse cx="21.2" cy="13.8" rx="1.9" ry="1.1" fill="#2e2624"/><path d="M14 21 Q17.4 22 20.8 21" stroke="#a86e5c" stroke-width="1" fill="none"/></g></svg>
<div class="t" style="left:647.91px;top:827.57px;font-size:27.5px;transform:scaleX(0.9295);">Dave Borowitz (…</div>
<div class="dash" style="left:872px;top:825.20px"></div><div class="dash" style="left:880px;top:825.20px"></div>
<div class="t" style="left:1000.87px;top:825.77px;font-size:27.5px;transform:scaleX(0.9861);">gerrit</div>
<div class="t" style="left:1226.34px;top:825.77px;font-size:27.5px;transform:scaleX(1.0043);">master</div>
<div class="t" style="left:1494.39px;top:825.77px;font-size:27.5px;transform:scaleX(0.9815);">May 17</div>
<div class="t" style="left:1613.13px;top:825.77px;font-size:27.5px;transform:scaleX(0.9333);">S</div>
<div class="t" style="left:1706.45px;top:826.37px;font-size:27.5px;transform:scaleX(0.9183);color:#388e3c">+1</div>
<svg class="ic" style="left:1787.02px;top:811.90px;width:29.47px;height:29.47px" viewBox="0 0 24 24"><path fill="#388e3c" stroke="#388e3c" stroke-width="0.45" stroke-linejoin="miter" d="M9 16.17L4.83 12l-1.42 1.41L9 19 21 7l-1.41-1.41z"/></svg>
<svg class="ic" style="left:1865.77px;top:811.90px;width:29.47px;height:29.47px" viewBox="0 0 24 24"><path fill="#388e3c" stroke="#388e3c" stroke-width="0.45" stroke-linejoin="miter" d="M9 16.17L4.83 12l-1.42 1.41L9 19 21 7l-1.41-1.41z"/></svg>
<div class="t" style="left:25.76px;top:888.46px;font-size:27.5px;transform:scaleX(0.9517);">Remove TODOs about chmodding wit…</div>
<div class="dash" style="left:509px;top:889.79px"></div><div class="dash" style="left:517px;top:889.79px"></div>
<svg class="av" style="left:602.50px;top:870.49px;width:34.60px;height:34.60px" viewBox="0 0 34.6 34.6"><defs><clipPath id="cdave887"><circle cx="17.3" cy="17.3" r="17.3"/></clipPath></defs><g clip-path="url(#cdave887)"><rect width="35" height="35" fill="#f7f5f1"/><path d="M3 35 Q5 28.5 11.5 27.5 L23 27.5 Q29.5 28.5 31.5 35z" fill="#111"/><path d="M10.5 20 L24 20 L23.5 29 Q17.3 31.5 11 29z" fill="#cf9c84"/><path d="M12.5 25.5 L21.5 25.5 L19.5 29.5 L14 29.5z" fill="#7f7d7a"/><ellipse cx="7.3" cy="16.3" rx="1.5" ry="2.6" fill="#e07868"/><ellipse cx="27.6" cy="16.3" rx="1.5" ry="2.6" fill="#e07868"/><ellipse cx="17.4" cy="14.8" rx="8.2" ry="10.8" fill="#dcaa93"/><path d="M8.6 15 Q8 2.5 17.4 2.8 Q27 2.5 26.3 15 Q25.5 7.5 24 7 Q17.4 5.5 11 7 Q9.3 7.5 8.6 15z" fill="#2b2623"/><ellipse cx="13.6" cy="13.8" rx="1.9" ry="1.1" fill="#2e2624"/><ellipse cx="21.2" cy="13.8" rx="1.9" ry="1.1" fill="#2e2624"/><path d="M14 21 Q17.4 22 20.8 21" stroke="#a86e5c" stroke-width="1" fill="none"/></g></svg>
<div class="t" style="left:647.91px;top:890.26px;font-size:27.5px;transform:scaleX(0.9295);">Dave Borowitz (…</div>
<div class="dash" style="left:872px;top:887.89px"></div><div class="dash" style="left:880px;top:887.89px"></div>
<div class="t" style="left:1000.87px;top:888.46px;font-size:27.5px;transform:scaleX(0.9861);">gerrit</div>
<div class="t" style="left:1226.34px;top:888.46px;font-size:27.5px;transform:scaleX(1.0043);">master</div>
<div class="t" style="left:1494.39px;top:888.46px;font-size:27.5px;transform:scaleX(0.9815);">May 17</div>
<div class="t" style="left:1613.62px;top:888.46px;font-size:27.5px;transform:scaleX(0.9122);">XS</div>
<svg class="ic" style="left:1707.77px;top:874.59px;width:29.47px;height:29.47px" viewBox="0 0 24 24"><path fill="#388e3c" stroke="#388e3c" stroke-width="0.45" stroke-linejoin="miter" d="M9 16.17L4.83 12l-1.42 1.41L9 19 21 7l-1.41-1.41z"/></svg>
<svg class="ic" style="left:1787.02px;top:874.59px;width:29.47px;height:29.47px" viewBox="0 0 24 24"><path fill="#388e3c" stroke="#388e3c" stroke-width="0.45" stroke-linejoin="miter" d="M9 16.17L4.83 12l-1.42 1.41L9 19 21 7l-1.41-1.41z"/></svg>
<svg class="ic" style="left:1865.77px;top:874.59px;width:29.47px;height:29.47px" viewBox="0 0 24 24"><path fill="#388e3c" stroke="#388e3c" stroke-width="0.45" stroke-linejoin="miter" d="M9 16.17L4.83 12l-1.42 1.41L9 19 21 7l-1.41-1.41z"/></svg>
<div class="t" style="left:26.68px;top:951.15px;font-size:27.5px;transform:scaleX(0.9730);">Split testsuite.project package into it…</div>
<div class="dash" style="left:509px;top:952.48px"></div><div class="dash" style="left:517px;top:952.48px"></div>
<svg class="av" style="left:602.50px;top:933.18px;width:34.60px;height:34.60px" viewBox="0 0 34.6 34.6"><defs><clipPath id="cdave950"><circle cx="17.3" cy="17.3" r="17.3"/></clipPath></defs><g clip-path="url(#cdave950)"><rect width="35" height="35" fill="#f7f5f1"/><path d="M3 35 Q5 28.5 11.5 27.5 L23 27.5 Q29.5 28.5 31.5 35z" fill="#111"/><path d="M10.5 20 L24 20 L23.5 29 Q17.3 31.5 11 29z" fill="#cf9c84"/><path d="M12.5 25.5 L21.5 25.5 L19.5 29.5 L14 29.5z" fill="#7f7d7a"/><ellipse cx="7.3" cy="16.3" rx="1.5" ry="2.6" fill="#e07868"/><ellipse cx="27.6" cy="16.3" rx="1.5" ry="2.6" fill="#e07868"/><ellipse cx="17.4" cy="14.8" rx="8.2" ry="10.8" fill="#dcaa93"/><path d="M8.6 15 Q8 2.5 17.4 2.8 Q27 2.5 26.3 15 Q25.5 7.5 24 7 Q17.4 5.5 11 7 Q9.3 7.5 8.6 15z" fill="#2b2623"/><ellipse cx="13.6" cy="13.8" rx="1.9" ry="1.1" fill="#2e2624"/><ellipse cx="21.2" cy="13.8" rx="1.9" ry="1.1" fill="#2e2624"/><path d="M14 21 Q17.4 22 20.8 21" stroke="#a86e5c" stroke-width="1" fill="none"/></g></svg>
<div class="t" style="left:647.91px;top:952.95px;font-size:27.5px;transform:scaleX(0.9295);">Dave Borowitz (…</div>
<div class="dash" style="left:872px;top:950.58px"></div><div class="dash" style="left:880px;top:950.58px"></div>
<div class="t" style="left:1000.87px;top:951.15px;font-size:27.5px;transform:scaleX(0.9861);">gerrit</div>
<div class="t" style="left:1226.42px;top:951.15px;font-size:27.5px;transform:scaleX(0.9628);">master (test-projec…</div>
<div class="t" style="left:1494.39px;top:951.15px;font-size:27.5px;transform:scaleX(0.9815);">May 17</div>
<div class="t" style="left:1613.13px;top:951.15px;font-size:27.5px;transform:scaleX(0.9333);">S</div>
<svg class="ic" style="left:1787.02px;top:937.28px;width:29.47px;height:29.47px" viewBox="0 0 24 24"><path fill="#388e3c" stroke="#388e3c" stroke-width="0.45" stroke-linejoin="miter" d="M9 16.17L4.83 12l-1.42 1.41L9 19 21 7l-1.41-1.41z"/></svg>
<svg class="ic" style="left:1861.07px;top:932.20px;width:39.36px;height:39.36px" viewBox="0 0 24 24"><path fill="#d32f2f" d="M19 6.41L17.59 5 12 10.59 6.41 5 5 6.41 10.59 12 5 17.59 6.41 19 12 13.41 17.59 19 19 17.59 13.41 12z"/></svg>
<div class="t" style="left:25.78px;top:1013.84px;font-size:27.5px;transform:scaleX(0.9437);">DO NOT SUBMIT: inline permission m…</div>
<div class="dash" style="left:509px;top:1015.17px"></div><div class="dash" style="left:517px;top:1015.17px"></div>
<svg class="av" style="left:602.50px;top:995.87px;width:34.60px;height:34.60px" viewBox="0 0 34.6 34.6"><defs><clipPath id="cdave1013"><circle cx="17.3" cy="17.3" r="17.3"/></clipPath></defs><g clip-path="url(#cdave1013)"><rect width="35" height="35" fill="#f7f5f1"/><path d="M3 35 Q5 28.5 11.5 27.5 L23 27.5 Q29.5 28.5 31.5 35z" fill="#111"/><path d="M10.5 20 L24 20 L23.5 29 Q17.3 31.5 11 29z" fill="#cf9c84"/><path d="M12.5 25.5 L21.5 25.5 L19.5 29.5 L14 29.5z" fill="#7f7d7a"/><ellipse cx="7.3" cy="16.3" rx="1.5" ry="2.6" fill="#e07868"/><ellipse cx="27.6" cy="16.3" rx="1.5" ry="2.6" fill="#e07868"/><ellipse cx="17.4" cy="14.8" rx="8.2" ry="10.8" fill="#dcaa93"/><path d="M8.6 15 Q8 2.5 17.4 2.8 Q27 2.5 26.3 15 Q25.5 7.5 24 7 Q17.4 5.5 11 7 Q9.3 7.5 8.6 15z" fill="#2b2623"/><ellipse cx="13.6" cy="13.8" rx="1.9" ry="1.1" fill="#2e2624"/><ellipse cx="21.2" cy="13.8" rx="1.9" ry="1.1" fill="#2e2624"/><path d="M14 21 Q17.4 22 20.8 21" stroke="#a86e5c" stroke-width="1" fill="none"/></g></svg>
<div class="t" style="left:647.91px;top:1015.64px;font-size:27.5px;transform:scaleX(0.9295);">Dave Borowitz (…</div>
<div class="dash" style="left:872px;top:1013.27px"></div><div class="dash" style="left:880px;top:1013.27px"></div>
<div class="t" style="left:1000.87px;top:1013.84px;font-size:27.5px;transform:scaleX(0.9861);">gerrit</div>
<div class="t" style="left:1226.34px;top:1013.84px;font-size:27.5px;transform:scaleX(1.0043);">master</div>
<div class="t" style="left:1494.39px;top:1013.84px;font-size:27.5px;transform:scaleX(0.9815);">May 17</div>
<div class="t" style="left:1613.62px;top:1013.84px;font-size:27.5px;transform:scaleX(0.9122);">XS</div>
<svg class="ic" style="left:1703.07px;top:994.89px;width:39.36px;height:39.36px" viewBox="0 0 24 24"><path fill="#d32f2f" d="M19 6.41L17.59 5 12 10.59 6.41 5 5 6.41 10.59 12 5 17.59 6.41 19 12 13.41 17.59 19 19 17.59 13.41 12z"/></svg>
<svg class="ic" style="left:1787.02px;top:999.97px;width:29.47px;height:29.47px" viewBox="0 0 24 24"><path fill="#388e3c" stroke="#388e3c" stroke-width="0.45" stroke-linejoin="miter" d="M9 16.17L4.83 12l-1.42 1.41L9 19 21 7l-1.41-1.41z"/></svg>
<svg class="ic" style="left:1861.07px;top:994.89px;width:39.36px;height:39.36px" viewBox="0 0 24 24"><path fill="#d32f2f" d="M19 6.41L17.59 5 12 10.59 6.41 5 5 6.41 10.59 12 5 17.59 6.41 19 12 13.41 17.59 19 19 17.59 13.41 12z"/></svg>
<div class="hl" style="top:168px"></div>
<div class="hl" style="top:231px"></div>
<div class="hl" style="top:294px"></div>
<div class="hl" style="top:356px"></div>
<div class="hl" style="top:419px"></div>
<div class="hl" style="top:482px"></div>
<div class="hl" style="top:544px"></div>
<div class="hl" style="top:607px"></div>
<div class="hl" style="top:670px"></div>
<div class="hl" style="top:733px"></div>
<div class="hl" style="top:795px"></div>
<div class="hl" style="top:858px"></div>
<div class="hl" style="top:921px"></div>
<div class="hl" style="top:983px"></div>
<div class="hl" style="top:1046px"></div>
<div class="vl" style="left:1682.0px"></div>
<div class="vl" style="left:1761.5px"></div>
<div class="vl" style="left:1840.5px"></div>
</body></html>
